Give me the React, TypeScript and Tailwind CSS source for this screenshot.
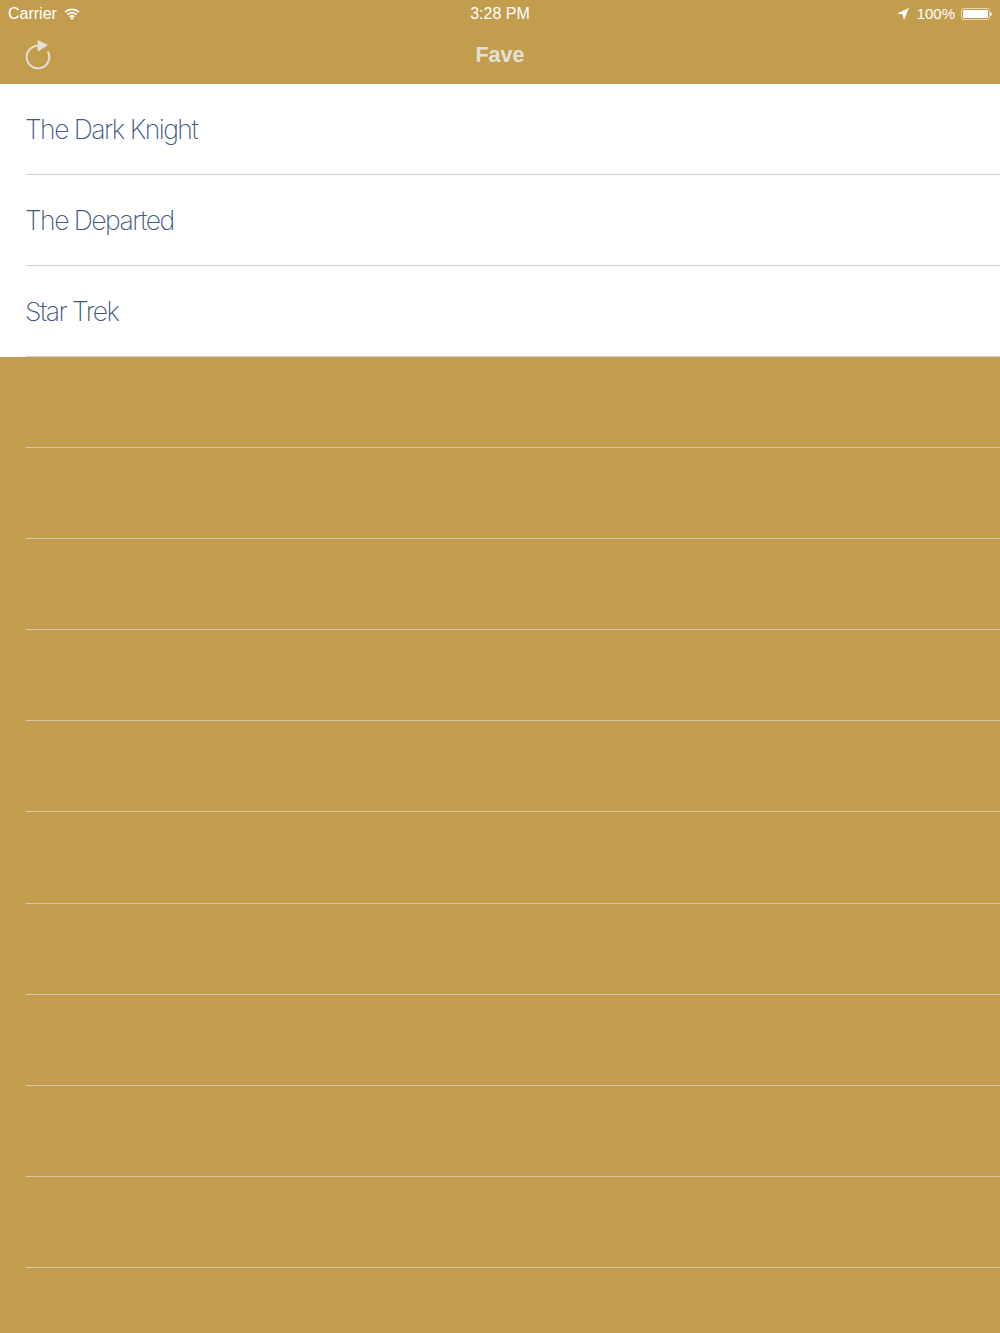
import React from 'react'

const movies = ['The Dark Knight', 'The Departed', 'Star Trek']
const emptyRows = Array.from({ length: 11 }, (_, i) => i)

const WifiIcon = () => (
  <svg width="16" height="12" viewBox="0 0 16 12" fill="none" stroke="#fff" strokeWidth="1.7">
    <path d="M1 4.2C5 .4 11 .4 15 4.2" />
    <path d="M3.4 6.6c2.7-2.4 6.5-2.4 9.2 0" />
    <path d="M5.7 8.8c1.4-1.1 3.2-1.1 4.6 0" />
    <path d="M8 12 6.2 10.2c1-.8 2.6-.8 3.6 0z" fill="#fff" stroke="none" />
  </svg>
)

const LocationIcon = () => (
  <svg width="12" height="12" viewBox="0 0 12 12" fill="#fff">
    <path d="M12 0 0 5.6l5.6.6L7 12z" />
  </svg>
)

const BatteryIcon = () => (
  <div className="flex items-center">
    <div className="w-[29px] h-[12px] rounded-[2.5px] border border-[#e6d6ae] p-[1px]">
      <div className="w-full h-full bg-white rounded-[1px]" />
    </div>
    <div className="w-[2px] h-[4px] bg-[#f3ead5] rounded-r-sm" />
  </div>
)

const RefreshIcon = () => (
  <svg width="26" height="32" viewBox="0 0 26 32" fill="none">
    <path d="M12.7 7.7A11.3 11.3 0 1 0 22.8 13.4" stroke="#e3e0da" strokeWidth="2" />
    <path d="M12.7 2 23 7 12.7 13.7z" fill="#e3e0da" />
  </svg>
)

const App: React.FC = () => {
  return (
    <div className="w-[1000px] h-[1333px] overflow-hidden bg-[#c29d4d] font-['Liberation_Sans',sans-serif]">
      {/* Status bar */}
      <div className="h-[27px] relative flex items-center justify-between pl-2 pr-2 text-white text-[15px] leading-none">
        <div className="flex items-center gap-[7px] text-[16px]">
          <span>Carrier</span>
          <WifiIcon />
        </div>
        <span className="absolute left-0 right-0 text-center text-[16px]">3:28 PM</span>
        <div className="flex items-center gap-[6px]">
          <LocationIcon />
          <span className="ml-[2px]">100%</span>
          <BatteryIcon />
        </div>
      </div>

      {/* Nav bar */}
      <div className="h-[57px] relative flex items-center justify-center">
        <div className="absolute left-[25px] top-[11px]">
          <RefreshIcon />
        </div>
        <span className="text-[21.5px] font-bold text-[#e3e0da] leading-none">Fave</span>
      </div>

      {/* Rows with movies */}
      <div className="bg-white">
        {movies.map((movie) => (
          <div key={movie} className="h-[91px] pl-[26px]">
            <div className="h-full flex items-center border-b border-[#cfd0d2] pt-[1px]">
              <span className="-ml-[1px] font-['Inter',sans-serif] font-extralight text-[26.5px] tracking-[-1.5px] text-[#3f5880]">{movie}</span>
            </div>
          </div>
        ))}
      </div>

      {/* Empty rows */}
      <div>
        {emptyRows.map((i) => (
          <div key={i} className="h-[91.1px] pl-[26px]">
            <div className="h-full border-b border-[#d7c8a8]" />
          </div>
        ))}
      </div>
    </div>
  )
}

export default App
